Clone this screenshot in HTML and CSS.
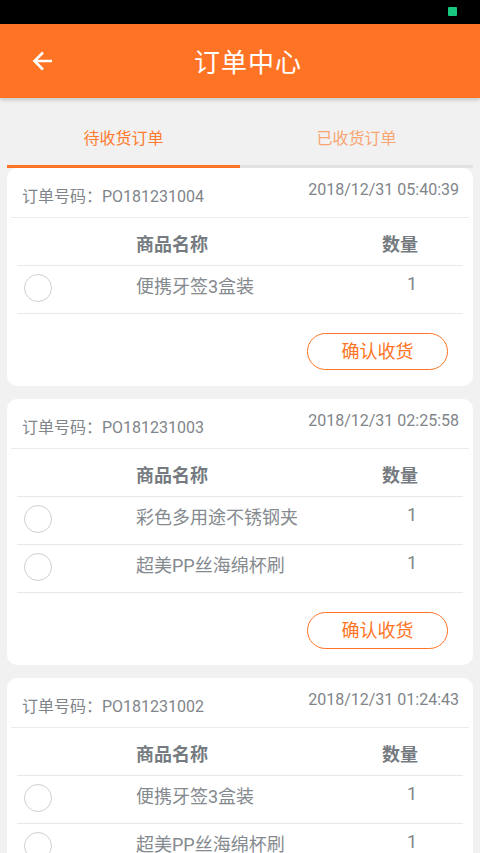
FILE: index.html
```html
<!DOCTYPE html>
<html>
<head>
    <meta charset="utf-8">
    <title>订单中心</title>
    <link rel="stylesheet" href="styles.css">
</head>
<body>
    <div class="status-bar">
        <span class="battery"></span>
    </div>

    <div class="top-bar">
        <span class="back">
            <svg width="22" height="22" viewBox="0 0 22 22">
                <path d="M20 11H3M11 2.5L2.5 11 11 19.5" fill="none" stroke="#fff" stroke-width="2.6"/>
            </svg>
        </span>
        <h1 class="title">订单中心</h1>
    </div>

    <div class="tabs">
        <div class="tab active">待收货订单</div>
        <div class="tab">已收货订单</div>
    </div>

    <div class="order-list">
        <div class="card">
            <div class="order-head">
                <span class="order-no">订单号码：PO181231004</span>
                <span class="order-date">2018/12/31 05:40:39</span>
            </div>
            <div class="goods">
                <div class="row head-row">
                    <span></span>
                    <span class="name">商品名称</span>
                    <span class="qty">数量</span>
                </div>
                <div class="row item-row">
                    <span class="check"></span>
                    <span class="name">便携牙签3盒装</span>
                    <span class="qty num">1</span>
                </div>
            </div>
            <div class="actions">
                <button class="confirm">确认收货</button>
            </div>
        </div>

        <div class="card">
            <div class="order-head">
                <span class="order-no">订单号码：PO181231003</span>
                <span class="order-date">2018/12/31 02:25:58</span>
            </div>
            <div class="goods">
                <div class="row head-row">
                    <span></span>
                    <span class="name">商品名称</span>
                    <span class="qty">数量</span>
                </div>
                <div class="row item-row">
                    <span class="check"></span>
                    <span class="name">彩色多用途不锈钢夹</span>
                    <span class="qty num">1</span>
                </div>
                <div class="row item-row">
                    <span class="check"></span>
                    <span class="name">超美PP丝海绵杯刷</span>
                    <span class="qty num">1</span>
                </div>
            </div>
            <div class="actions">
                <button class="confirm">确认收货</button>
            </div>
        </div>

        <div class="card">
            <div class="order-head">
                <span class="order-no">订单号码：PO181231002</span>
                <span class="order-date">2018/12/31 01:24:43</span>
            </div>
            <div class="goods">
                <div class="row head-row">
                    <span></span>
                    <span class="name">商品名称</span>
                    <span class="qty">数量</span>
                </div>
                <div class="row item-row">
                    <span class="check"></span>
                    <span class="name">便携牙签3盒装</span>
                    <span class="qty num">1</span>
                </div>
                <div class="row item-row">
                    <span class="check"></span>
                    <span class="name">超美PP丝海绵杯刷</span>
                    <span class="qty num">1</span>
                </div>
            </div>
            <div class="actions">
                <button class="confirm">确认收货</button>
            </div>
        </div>
    </div>
</body>
</html>
```
FILE: styles.css
```css
body {
    margin: 0;
    background: #f1f1f1;
    font-family: Roboto, "Noto Sans CJK SC", sans-serif;
    color: #7f858a;
    overflow: hidden;
}

.status-bar {
    height: 24px;
    background: #000;
    display: flex;
    justify-content: flex-end;
    align-items: center;
    padding-right: 23px;
}

.battery {
    width: 9px;
    height: 9px;
    background: #17c980;
    border-radius: 1px;
    margin-top: -1px;
}

.top-bar {
    height: 74px;
    background: #ff7424;
    display: flex;
    align-items: center;
    justify-content: center;
    position: relative;
    box-shadow: 0 2px 4px rgba(0, 0, 0, 0.18);
}

.back {
    position: absolute;
    left: 32px;
    top: 26px;
    width: 22px;
    height: 22px;
}

.title {
    margin: 0;
    color: #fff;
    font-size: 26px;
    font-weight: normal;
    letter-spacing: 1px;
    padding: 0 0 2px 16px;
}

.tabs {
    display: flex;
    margin: 0 7px;
}

.tab {
    flex: 1;
    text-align: center;
    font-size: 16px;
    line-height: 20px;
    padding: 31px 0 16px;
    color: #f8a573;
    border-bottom: 3px solid #e2e2e2;
}

.tab.active {
    color: #ff7a2c;
    border-bottom-color: #ff7424;
}

.order-list {
    display: flex;
    flex-direction: column;
    gap: 13px;
    margin: 0 7px;
}

.card {
    background: #fff;
    border-radius: 10px;
    padding: 0 4px;
}

.order-head {
    height: 49px;
    display: flex;
    justify-content: space-between;
    padding: 0 10px 0 11px;
    border-bottom: 1px solid #ebebeb;
}

.order-no {
    font-size: 16px;
    padding-top: 15px;
}

.order-date {
    font-size: 16px;
    padding-top: 12px;
}

.goods {
    margin: 0 6px;
}

.row {
    display: grid;
    grid-template-columns: 119px 1fr 80px;
    align-items: center;
    height: 47px;
    border-bottom: 1px solid #e8e8e8;
    padding-right: 23px;
}

.head-row .name,
.head-row .qty {
    font-size: 18px;
    font-weight: bold;
    color: #757b80;
    padding-top: 3px;
}

.qty {
    text-align: center;
}

.item-row .name {
    font-size: 18px;
    color: #858a8f;
    padding-bottom: 9px;
}

.num {
    font-size: 18px;
    padding: 0 0 12px 24px;
}

.check {
    width: 26px;
    height: 26px;
    border: 1.5px solid #cfcfcf;
    border-radius: 50%;
    margin-left: 7px;
    margin-bottom: 4px;
}

.actions {
    display: flex;
    justify-content: flex-end;
    padding: 19px 21px 16px 0;
}

.confirm {
    width: 141px;
    height: 37px;
    border: 1.5px solid #ff7424;
    border-radius: 19px;
    background: #fff;
    color: #ff7424;
    font-family: Roboto, "Noto Sans CJK SC", sans-serif;
    font-size: 18px;
    padding: 0;
    padding-bottom: 3px;
}
```
